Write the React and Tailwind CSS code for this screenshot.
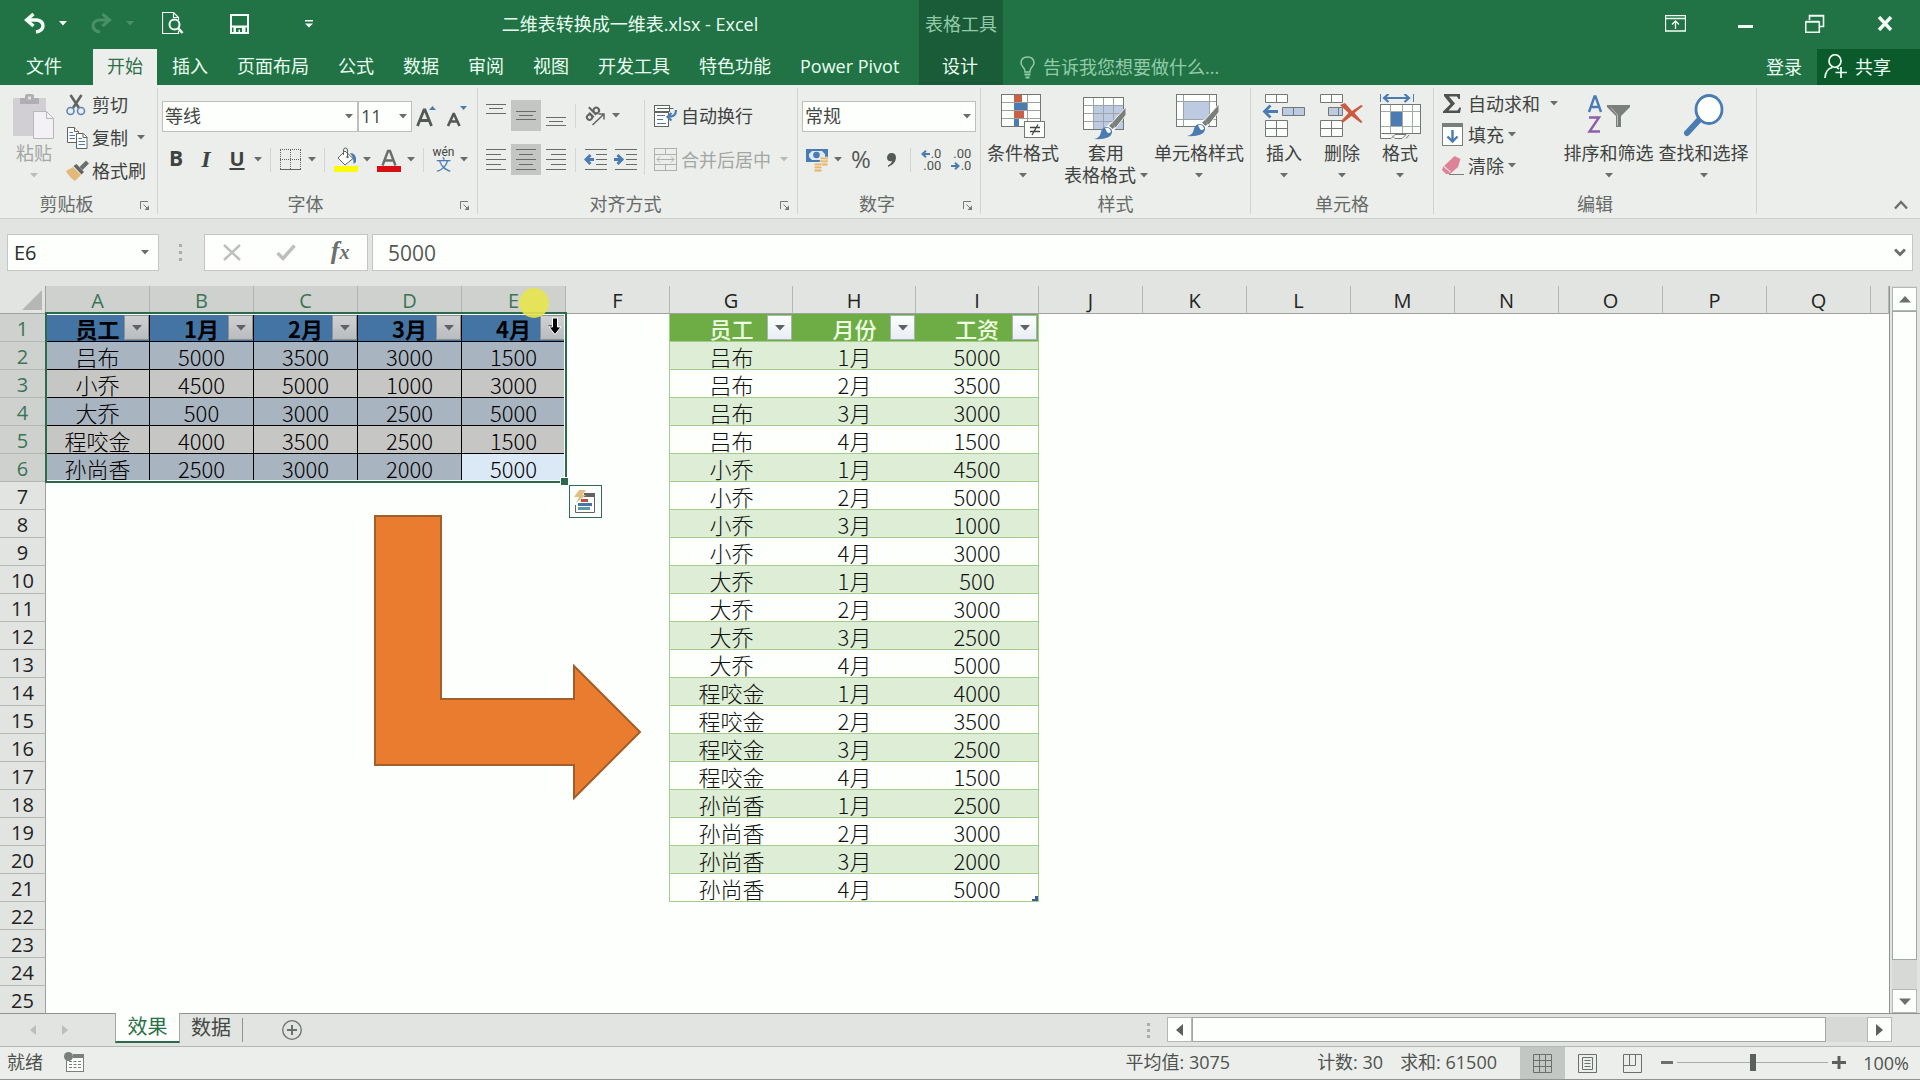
import React from "react";

const SHEET_FONT = "font-['Noto_Sans_CJK_SC',sans-serif]";
const LETTERS = ["A", "B", "C", "D", "E", "F", "G", "H", "I", "J", "K", "L", "M", "N", "O", "P", "Q", ""];

const WIDE = [
  ["员工", "1月", "2月", "3月", "4月"],
  ["吕布", "5000", "3500", "3000", "1500"],
  ["小乔", "4500", "5000", "1000", "3000"],
  ["大乔", "500", "3000", "2500", "5000"],
  ["程咬金", "4000", "3500", "2500", "1500"],
  ["孙尚香", "2500", "3000", "2000", "5000"],
];
const LONG = [
  ["员工", "月份", "工资"],
  ...WIDE.slice(1).flatMap((r) => r.slice(1).map((v, i) => [r[0], WIDE[0][i + 1], v])),
];

/* ---------- small pieces ---------- */

function Caret({ className = "text-[#6a6e6a]" }) {
  return (
    <svg width="8" height="5" viewBox="0 0 8 5" className={"shrink-0 " + className} fill="currentColor" aria-hidden="true">
      <path d="M0 0H8L4 4.6Z" />
    </svg>
  );
}

function CaretButton({ label, className }) {
  return (
    <button aria-label={label} className="flex h-[31px] w-[12px] shrink-0 items-center justify-center">
      <Caret className={className} />
    </button>
  );
}

function Sep() {
  return (
    <span className="flex h-[24px] w-[12px] shrink-0 justify-center">
      <span className="w-px bg-[#d3d6d3]" />
    </span>
  );
}

function Tool({ label, w = "w-[30px]", active, children }) {
  return (
    <button
      aria-label={label}
      className={"flex h-[31px] shrink-0 items-center justify-center " + w + (active ? " bg-[#c3c6c3]" : "")}
    >
      {children}
    </button>
  );
}

function Group({ w, label, launcher, children }) {
  return (
    <section aria-label={label} className={"mt-[3px] flex h-[126px] shrink-0 flex-col border-r border-[#d0d3d0] " + w}>
      <div className="flex flex-1">{children}</div>
      <div className="flex h-[20px] items-center text-[#666a66]">
        <span className="flex-1 text-center leading-[20px]">{label}</span>
        {launcher && (
          <button aria-label={label + "设置"} className="flex w-[24px] justify-center pt-[4px]">
            <svg width="10" height="10" viewBox="0 0 10 10" fill="none" stroke="#777b77" aria-hidden="true">
              <path d="M.5 8V.5H8M3.5 3.5L7.5 7.5" />
              <path d="M9 4.5V9H4.5Z" fill="#777b77" stroke="none" />
            </svg>
          </button>
        )}
      </div>
    </section>
  );
}

function Big({ w, icon, lines, caretInline, muted }) {
  return (
    <button className={"flex shrink-0 flex-col items-center pt-[6px] " + w + (muted ? " text-[#a3a6a3]" : "")}>
      <span className="flex h-[48px] justify-center">{icon}</span>
      <span className="whitespace-nowrap leading-[22px]">{lines[0]}</span>
      <span className="flex h-[22px] items-center gap-[4px] whitespace-nowrap leading-[22px]">
        {caretInline && lines[1]}
        <Caret className={muted ? "text-[#b9bcb9]" : "text-[#6a6e6a]"} />
      </span>
    </button>
  );
}

function SmallRow({ h = "h-[33px]", icon, text, caret, gap = "gap-[12px]" }) {
  return (
    <button className={"flex items-center whitespace-nowrap " + h}>
      <span className="flex w-[26px] shrink-0 items-center justify-start">{icon}</span>
      <span className={"flex items-center " + gap}>
        {text}
        {caret && <Caret />}
      </span>
    </button>
  );
}

/* ---------- ribbon drawings ---------- */

const B = "#4a7cb3";
const G = "#6c706c";

function Lines({ rows, w = 20, h = 22, children }) {
  return (
    <svg width={w} height={h} viewBox={`0 0 ${w} ${h}`} stroke="#686c68" fill="none" aria-hidden="true">
      {rows.map(([x1, x2, y], i) => (
        <path key={i} d={`M${x1} ${y}.5H${x2}`} />
      ))}
      {children}
    </svg>
  );
}

const PasteIcon = (
  <svg width="42" height="46" viewBox="0 0 42 46" aria-hidden="true">
    <rect x="0" y="4" width="33" height="38" rx="1" fill="#d2cfd4" />
    <path d="M7 4H12V1.5Q12 0 14 0H19Q21 0 21 1.5V4H26V10H7Z" fill="#b0aeb2" />
    <rect x="15" y="2.500" width="3" height="3" fill="#e4e2e6" />
    <path d="M20.500 17.500H33.500L40.500 24.500V44.500H20.500Z" fill="#f4f1f6" stroke="#b9b6bc" />
    <path d="M33.500 17.500V24.500H40.500" fill="none" stroke="#b9b6bc" />
  </svg>
);
const CutIcon = (
  <svg width="20" height="22" viewBox="0 0 20 22" fill="none" aria-hidden="true">
    <path d="M4.500 1L13 14M15.500 1L7 14" stroke="#616561" strokeWidth="2.600" />
    <circle cx="4.500" cy="17" r="3.500" stroke="#5b86ba" strokeWidth="1.600" />
    <circle cx="15" cy="17" r="3.500" stroke="#5b86ba" strokeWidth="1.600" />
  </svg>
);
const CopyIcon = (
  <svg width="22" height="22" viewBox="0 0 22 22" fill="#fdfffd" stroke="#616561" aria-hidden="true">
    <path d="M1.500 .5H8.500L12.500 4.500V15.500H1.500Z" />
    <path d="M8.500 .5V4.500H12.500" />
    <path d="M3.500 5.500H7M3.500 8.500H9M3.500 11.500H9" stroke={B} />
    <path d="M10.500 6.500H17.500L21 10V21.500H10.500Z" />
    <path d="M17 6.500V10.500H21" />
    <path d="M12.500 11.500H16M12.500 14.500H19M12.500 17.500H19" stroke={B} />
  </svg>
);
const PainterIcon = (
  <svg width="24" height="22" viewBox="0 0 24 22" aria-hidden="true">
    <path d="M0 11L7 7L15 15L9 21Q3 17 0 11Z" fill="#e3b878" />
    <path d="M7.500 6L10.500 4L18 12L15.500 14.500Z" fill="#616561" />
    <path d="M13.500 7L20 .5L23 3.500L16.500 10Z" fill="#6c706c" />
  </svg>
);
const GrowIcon = (up) => (
  <svg width="24" height="26" viewBox="0 0 24 26" aria-hidden="true">
    {up ? (
      <>
        <path d="M2.500 22L9 6H10L16.500 22M5 16.500H14" fill="none" stroke="#555955" strokeWidth="2.800" />
        <path d="M14 6H21L17.500 2Z" fill={B} />
      </>
    ) : (
      <>
        <path d="M3 22L8.500 10H9L14.500 22M5 17.500H12.500" fill="none" stroke="#555955" strokeWidth="2.600" />
        <path d="M15 2H22L18.500 6Z" fill={B} />
      </>
    )}
  </svg>
);
const BordersIcon = (
  <svg width="22" height="22" viewBox="0 0 22 22" fill="none" stroke="#616561" aria-hidden="true">
    <path d="M.5 1V20M10.500 1V20M20.500 1V20M0 .5H21M0 10.500H21" strokeDasharray="1 1" />
    <path d="M0 20.500H21" />
  </svg>
);
const FillIcon = (
  <svg width="26" height="26" viewBox="0 0 26 26" aria-hidden="true">
    <rect x="1" y="19" width="24" height="6" fill="#fdf90a" />
    <path d="M12 4L20 11.500L12 18L5 11Z" fill="#fdfffd" stroke="#616561" />
    <path d="M10.500 8V3Q10.500 1 12.500 1T14.500 3V10" fill="none" stroke="#616561" />
    <circle cx="14.500" cy="10" r="1.200" fill="#616561" />
    <path d="M17 6Q22 6 23 11V15L20.500 17Q21 11 17 6Z" fill={B} />
  </svg>
);
const FontColorIcon = (
  <svg width="24" height="26" viewBox="0 0 24 26" aria-hidden="true">
    <rect x="0" y="19" width="24" height="6" fill="#d90e12" />
    <path d="M5.500 18.500L11 4H13L18.500 18.500M8 13.500H16" fill="none" stroke="#696d69" strokeWidth="2.400" />
  </svg>
);
const OrientIcon = (
  <svg width="22" height="24" viewBox="0 0 22 24" fill="none" stroke="#616561" aria-hidden="true">
    <g transform="rotate(-45 8 10)" strokeWidth="2">
      <circle cx="4" cy="10.500" r="2.600" />
      <path d="M7 7V13.500M10.500 3V13.500" />
      <circle cx="13.500" cy="10.500" r="2.800" />
    </g>
    <path d="M8.500 21L19.500 10.500M14.500 10H20V15.500" strokeWidth="1.500" />
  </svg>
);
const Indent = (out) => (
  <Lines w={23} h={22} rows={[[1, 23, 0], [12, 23, 5], [12, 23, 10], [12, 23, 15], [1, 23, 20]]}>
    <path
      d={out ? "M10 10.500H3M6.500 6L2 10.500L6.500 15" : "M0 10.500H7M3.500 6L8 10.500L3.500 15"}
      stroke={B}
      strokeWidth="3"
    />
  </Lines>
);
const WrapIcon = (
  <svg width="24" height="22" viewBox="0 0 24 22" fill="none" stroke="#616561" aria-hidden="true">
    <rect x=".5" y=".5" width="15" height="6" fill="#fdfffd" />
    <path d="M3 3.500H19.500" />
    <rect x=".5" y="7.500" width="14" height="14" fill="#fdfffd" />
    <path d="M3 10.500H11M3 14.500H9M3 18.500H12" stroke="#55779f" />
    <path d="M22 5Q22 12 14 12M17.500 8L13.500 12L17.500 15.500" stroke={B} strokeWidth="2.200" />
  </svg>
);
const MergeIcon = (
  <svg width="23" height="23" viewBox="0 0 23 23" fill="none" stroke="#aeb1ae" aria-hidden="true">
    <rect x=".5" y=".5" width="22" height="22" />
    <path d="M0 6.500H23M0 16.500H23M11.500 0V6M11.500 17V23M3 11.500H20M6 8.500L3 11.500L6 14.500M17 8.500L20 11.500L17 14.500" />
  </svg>
);
const MoneyIcon = (
  <svg width="24" height="24" viewBox="0 0 24 24" aria-hidden="true">
    <rect x="1" y="1" width="22" height="13" fill={B} />
    <path d="M4 3H20V12H4Z" fill="#dfe8f3" />
    <path d="M4 3H7L4 6ZM20 3H17L20 6ZM4 12V9L7 12Z" fill={B} />
    <circle cx="11.500" cy="7" r="3.300" fill={B} />
    <g fill="#e8b76a" stroke="#eceeec" strokeWidth=".8">
      <rect x="15" y="9" width="8" height="3" rx="1.500" />
      <rect x="15" y="12" width="8" height="3" rx="1.500" />
      <rect x="15" y="15" width="8" height="3" rx="1.500" />
      <rect x="9" y="15" width="8" height="3" rx="1.500" />
      <rect x="9" y="18" width="8" height="3" rx="1.500" />
      <rect x="9" y="21" width="8" height="3" rx="1.500" />
    </g>
  </svg>
);
const MiniArrow = (left) => (
  <svg width="9" height="8" viewBox="0 0 9 8" fill="none" stroke={B} strokeWidth="2" aria-hidden="true">
    <path d={left ? "M9 4H2M5 .8L1.500 4L5 7.200" : "M0 4H7M4 .8L7.500 4L4 7.200"} />
  </svg>
);
const Decimal = (inc) => (
  <span className="flex flex-col font-['Roboto',sans-serif] text-[13px] leading-[12px] text-[#4f534f]">
    <span className="flex items-center justify-end gap-px">
      {inc && MiniArrow(true)}
      {inc ? ".0" : ".00"}
    </span>
    <span className="flex items-center justify-end gap-px">
      {!inc && MiniArrow(false)}
      {inc ? ".00" : ".0"}
    </span>
  </span>
);
const CondIcon = (
  <svg width="44" height="44" viewBox="0 0 44 44" aria-hidden="true">
    <rect x=".5" y=".5" width="39" height="32" fill="#fdfffd" stroke="#747874" />
    <path d="M13.500 1V32M26.500 1V32M1 8.500H39M1 16.500H39M1 24.500H39" stroke="#9da19d" />
    <rect x="13" y="1" width="8" height="7" fill="#c96045" />
    <rect x="13" y="9" width="13" height="7" fill={B} />
    <rect x="13" y="17" width="10" height="7" fill="#c96045" />
    <rect x="13" y="25" width="5" height="7" fill={B} />
    <rect x="23.500" y="27.500" width="20" height="16" fill="#fdfffd" stroke="#747874" />
    <path d="M29 33.500H39M29 37.500H39M37 30.500L31 41" stroke="#444" strokeWidth="1.300" fill="none" />
  </svg>
);
const Brush = (
  <>
    <path d="M26 29L43 10V18L31 33Z" fill="#7b7f7b" stroke="#eceeec" />
    <path d="M23 30L28 25L33 31L29 35Z" fill="#fdfffd" />
    <path d="M26 28.500L29 26L32 30L29.500 32Z" fill="#7b7f7b" />
    <path d="M11 42Q17 41 18 35Q19 30 24 30Q30 31 29 36Q27 43 11 42Z" fill={B} />
    <path d="M22 31Q27 30 28 35Q25 37 24 35Z" fill="#fdfffd" />
  </>
);
const TableStyleIcon = (
  <svg width="46" height="46" viewBox="0 0 46 46" aria-hidden="true">
    <rect x=".5" y="3.500" width="40" height="32" fill="#fdfffd" />
    <rect x="10" y="12" width="30" height="23" fill="#bccbe1" />
    <path d="M10.500 4V35M20.500 4V35M30.500 4V35M1 11.500H40M1 19.500H40M1 27.500H40" stroke="#9da3a6" />
    <rect x=".5" y="3.500" width="40" height="32" fill="none" stroke="#747874" />
    <g transform="translate(0 3)">{Brush}</g>
  </svg>
);
const CellStyleIcon = (
  <svg width="46" height="46" viewBox="0 0 46 46" aria-hidden="true">
    <rect x=".5" y=".5" width="40" height="32" fill="#fdfffd" stroke="#747874" />
    <path d="M7.500 1V32M33.500 1V32M1 7.500H40M1 25.500H40" stroke="#9da3a6" />
    <rect x="8" y="8" width="25" height="17" fill="#bccbe1" />
    {Brush}
  </svg>
);
const InsertIcon = (
  <svg width="44" height="44" viewBox="0 0 44 44" fill="#fdfffd" stroke="#747874" aria-hidden="true">
    <path d="M3.500 .5H25.500V8.500H3.500ZM14.500 .5V8.500M3.500 26.500H25.500V42.500H3.500ZM14.500 26.500V42.500M3.500 34.500H25.500" />
    <path d="M20.500 13.500H42.500V21.500H20.500ZM31.500 13.500V21.500" fill="#bccbe1" />
    <path d="M16 17.500H3M8.500 11.500L2.500 17.500L8.500 23.500" fill="none" stroke={B} strokeWidth="2.800" />
  </svg>
);
const DeleteIcon = (
  <svg width="44" height="44" viewBox="0 0 44 44" fill="#fdfffd" stroke="#747874" aria-hidden="true">
    <path d="M.5 .5H22.500V8.500H.5ZM11.500 .5V8.500M.5 26.500H22.500V42.500H.5ZM11.500 26.500V42.500M.5 34.500H22.500" />
    <path d="M8.500 13.500H22.500V21.500H8.500ZM18.500 13.500V21.500" fill="#bccbe1" />
    <path d="M20 11L25 9L32 17L41 11L43 12L34.500 19L42.500 28L41 29L31.500 22L22.500 29L21 27L28.500 19Z" fill="#cb5a3f" stroke="none" />
  </svg>
);
const FormatIcon = (
  <svg width="42" height="46" viewBox="0 0 42 46" fill="none" stroke="#747874" aria-hidden="true">
    <path d="M1.500 0V8M34.500 0V8" stroke={B} />
    <path d="M5 4H30M9.500 0L5 4L9.500 8M25.500 0L30 4L25.500 8" stroke={B} strokeWidth="2.200" />
    <rect x="1.500" y="10.500" width="40" height="29" fill="#fdfffd" />
    <path d="M11.500 11V39M23.500 11V39M33.500 11V39M2 17.500H41M2 32.500H41" stroke="#a6aaa6" />
    <rect x="12" y="18" width="11" height="14" fill={B} stroke="none" />
    <path d="M1.500 39.500V44.500H12L16 40.500H27L23 44.500H16L14 42.500M27 44.500L30 41" fill="#fdfffd" />
  </svg>
);
const SumIcon = (
  <svg width="20" height="20" viewBox="0 0 20 20" fill="#4f534f" aria-hidden="true">
    <path d="M2 0H18V5H16.500L15 2.500H7L13 9.500L6.500 16.500H15.500L17.500 13.500H19L18 19H1V17.500L8.500 10L2 2Z" />
  </svg>
);
const FillDownIcon = (
  <svg width="21" height="24" viewBox="0 0 21 24" aria-hidden="true">
    <rect x=".5" y=".5" width="20" height="22" fill="#fdfffd" stroke="#7b7f7b" />
    <rect x="0" y="0" width="21" height="4" fill="#7b7f7b" />
    <path d="M10.500 7V18M5.500 13.500L10.500 18.500L15.500 13.500" fill="none" stroke={B} strokeWidth="2.400" />
  </svg>
);
const EraserIcon = (
  <svg width="22" height="21" viewBox="0 0 22 21" aria-hidden="true">
    <path d="M12.500 1L18.500 4L16 12L8 19H4L0 15L1 12Z" fill="#dd8398" />
    <path d="M2 11.500L8.500 17" stroke="#f3d3dc" strokeWidth="1.500" />
    <path d="M7 19.500H22" stroke="#7b7f7b" />
  </svg>
);
const SortIcon = (
  <svg width="44" height="46" viewBox="0 0 44 46" fill="none" aria-hidden="true">
    <path d="M2 18L7.500 2.500H8.500L14 18M4 13H12" stroke={B} strokeWidth="2.400" />
    <path d="M2 23.500H12L2.500 37.500H13" stroke="#8d5faa" strokeWidth="2.400" />
    <path d="M20 11H43V13L34 22V33H29V22L20 13Z" fill="#7b7f7b" />
    <path d="M24 13.500L30.500 21V32" stroke="#b9bcb9" strokeWidth="1" />
  </svg>
);
const FindIcon = (
  <svg width="42" height="44" viewBox="0 0 42 44" fill="none" aria-hidden="true">
    <path d="M16 26L4 39" stroke={B} strokeWidth="6" strokeLinecap="round" />
    <ellipse cx="26" cy="15.500" rx="13" ry="14" fill="#fdfffd" stroke={B} strokeWidth="2.800" />
  </svg>
);

/* ---------- header ---------- */

function TitleBar() {
  return (
    <div className="flex h-[49px] items-stretch">
      <div className="flex w-[919px] shrink-0 items-center">
        <div className="flex w-[341px] shrink-0 items-center pb-[2px] pl-[24px] text-[#f3fff6]">
          <button aria-label="撤消" className="mr-[13px]">
            <svg width="22" height="21" viewBox="0 0 22 21" fill="none" stroke="currentColor" strokeWidth="3.400" aria-hidden="true">
              <path d="M3 7H13Q19 8 19 13Q18.500 18 12 19" />
              <path d="M9.500 1L2.500 7L9.500 13" />
            </svg>
          </button>
          <button aria-label="撤消列表" className="mr-[23px]"><Caret className="text-[#f3fff6]" /></button>
          <button aria-label="恢复" className="mr-[14px] text-[#4a9067]">
            <svg width="22" height="21" viewBox="0 0 22 21" fill="none" stroke="currentColor" strokeWidth="3" aria-hidden="true">
              <path d="M19 7H9Q3 8 3 13Q3.500 18 10 19" />
              <path d="M12.500 1L19.500 7L12.500 13" />
            </svg>
          </button>
          <button aria-label="恢复列表" className="mr-[28px]"><Caret className="text-[#4a9067]" /></button>
          <button aria-label="打印预览" className="mr-[46px]">
            <svg width="22" height="23" viewBox="0 0 22 23" fill="none" stroke="currentColor" aria-hidden="true">
              <path d="M16.500 8V5.500L11.500 .5H.5V21.500H16.500V19M11.500 .5V5.500H16.500" strokeWidth="1.200" />
              <circle cx="12.500" cy="12.500" r="5" strokeWidth="2" />
              <path d="M16 16L20.500 21" strokeWidth="2.600" />
            </svg>
          </button>
          <button aria-label="保存" className="mr-[56px]">
            <svg width="19" height="20" viewBox="0 0 19 20" fill="none" stroke="currentColor" aria-hidden="true">
              <path d="M1 1H18V19H1ZM1 12.500H18" strokeWidth="2" />
              <path d="M3.500 12H15.500V18H3.500Z" fill="currentColor" stroke="none" />
              <path d="M6 18V14H12V18H10V15.500H8.500V18Z" fill="#217346" stroke="none" />
            </svg>
          </button>
          <button aria-label="自定义快速访问工具栏">
            <svg width="8" height="8" viewBox="0 0 8 8" fill="currentColor" aria-hidden="true">
              <path d="M0 0H8V1.500H0ZM0 3.500H8L4 7.500Z" />
            </svg>
          </button>
        </div>
        <h1 className="flex-1 pb-[2px] text-center text-[#eafff0]">二维表转换成一维表.xlsx - Excel</h1>
      </div>
      <div className="flex w-[84px] shrink-0 items-center justify-center bg-[#1a5c38] pb-[2px] text-[#93cba8]">表格工具</div>
      <div className="flex flex-1 items-center justify-end gap-[52px] pb-[2px] pr-[27px] text-[#f3fff6]">
        <button aria-label="功能区显示选项">
          <svg width="21" height="17" viewBox="0 0 21 17" fill="none" stroke="currentColor" aria-hidden="true">
            <path d="M.5 .5H20.500V16H.5ZM.5 3.500H20.500M10.500 14V6M7 9.500L10.500 6L14 9.500" strokeWidth="1.300" />
          </svg>
        </button>
        <button aria-label="最小化" className="pt-[6px]">
          <svg width="15" height="3" aria-hidden="true"><rect width="15" height="3" fill="currentColor" /></svg>
        </button>
        <button aria-label="还原">
          <svg width="20" height="19" viewBox="0 0 20 19" fill="none" stroke="currentColor" aria-hidden="true">
            <path d="M4.500 6V1.500H18.500V12.500H15M4 2H19" strokeWidth="1.600" />
            <path d="M.7 8H14.300V18.300H.7ZM.7 7.500H14.300" strokeWidth="1.600" />
          </svg>
        </button>
        <button aria-label="关闭">
          <svg width="16" height="15" viewBox="0 0 16 15" stroke="currentColor" strokeWidth="3.400" aria-hidden="true">
            <path d="M2 1L14 14M14 1L2 14" />
          </svg>
        </button>
      </div>
    </div>
  );
}

function TabBar() {
  const tabs = ["开始", "插入", "页面布局", "公式", "数据", "审阅", "视图", "开发工具", "特色功能", "Power Pivot"];
  return (
    <nav className="flex h-[36px] text-[#eafff0]">
      <div className="flex w-[919px] shrink-0 gap-px">
        <button className="mr-[4px] w-[88px] shrink-0 pb-[2px]">文件</button>
        {tabs.map((t, i) => (
          <button
            key={t}
            className={"shrink-0 whitespace-nowrap px-[14px] pb-[2px] " + (i === 0 ? "bg-[#eceeec] text-[#2c7049]" : "")}
          >
            {t}
          </button>
        ))}
      </div>
      <button className="w-[84px] shrink-0 bg-[#1a5c38] pb-[2px] pr-[2px]">设计</button>
      <div className="flex flex-1 items-center gap-[8px] pl-[17px] text-[#93cba8]">
        <svg width="15" height="23" viewBox="0 0 15 23" fill="none" stroke="currentColor" strokeWidth="1.500" aria-hidden="true">
          <path d="M5 16Q5 13 3 11Q1 9 1 6.500Q1.500 1 7.500 1T14 6.500Q14 9 12 11Q10 13 10 16Z" />
          <path d="M4.500 18.500H10.500M5.500 21.500H9.500" strokeWidth="2" />
        </svg>
        <input
          aria-label="告诉我您想要做什么"
          placeholder="告诉我您想要做什么..."
          className="w-[200px] bg-transparent pb-px placeholder:text-[#93cba8] placeholder:opacity-100"
        />
      </div>
      <button className="mr-[15px] shrink-0 pb-px">登录</button>
      <button className="flex w-[103px] shrink-0 items-center gap-[8px] bg-[#0b5a2c] pb-px pl-[7px]">
        <svg width="23" height="25" viewBox="0 0 23 25" fill="none" stroke="currentColor" strokeWidth="1.700" aria-hidden="true">
          <ellipse cx="11" cy="7" rx="6" ry="6.300" />
          <path d="M1 24Q1.500 15 8.500 13.500M13 13.500L15 15M11.500 18.500H23M17 13V24" />
        </svg>
        共享
      </button>
    </nav>
  );
}

function SelectBox({ label, value, w }) {
  return (
    <span className={"relative flex shrink-0 " + w}>
      <select
        aria-label={label}
        defaultValue={value}
        className="h-[31px] w-full appearance-none border border-[#bcc0bc] bg-[#fdfffd] pb-px pl-[2px] text-[#444844]"
      >
        <option>{value}</option>
      </select>
      <Caret className="pointer-events-none absolute right-[5px] top-[13px] text-[#6a6e6a]" />
    </span>
  );
}

function Ribbon() {
  return (
    <div className="flex h-[134px] border-b border-[#cdd0cd] bg-[#eceeec] text-[#3f433f]">
      <Group w="w-[158px]" label="剪贴板" launcher>
        <Big w="ml-[2px] w-[64px]" icon={PasteIcon} lines={["粘贴"]} muted />
        <div className="flex flex-col">
          <SmallRow icon={CutIcon} text="剪切" />
          <SmallRow icon={CopyIcon} text="复制" caret gap="gap-[9px]" />
          <SmallRow icon={PainterIcon} text="格式刷" />
        </div>
      </Group>

      <Group w="w-[320px]" label="字体" launcher>
        <div className="flex flex-col gap-[12px] pl-[4px] pt-[13px]">
          <div className="flex">
            <SelectBox label="字体名称" value="等线" w="w-[196px]" />
            <SelectBox label="字号" value="11" w="w-[54px]" />
            <Tool label="增大字号">{GrowIcon(true)}</Tool>
            <Tool label="减小字号">{GrowIcon(false)}</Tool>
          </div>
          <div className="flex items-center">
            <Tool label="加粗" w="w-[28px]"><b className="pb-[2px] text-[21px] leading-none">B</b></Tool>
            <Tool label="倾斜" w="w-[32px]"><i className="pb-[2px] font-['Liberation_Serif',serif] text-[24px] font-bold leading-none">I</i></Tool>
            <Tool label="下划线"><u className="pb-[2px] text-[20px] font-bold leading-none underline-offset-2">U</u></Tool>
            <CaretButton label="下划线选项" />
            <Sep />
            <Tool label="边框">{BordersIcon}</Tool>
            <CaretButton label="边框选项" />
            <Sep />
            <Tool label="填充颜色" w="w-[31px]">{FillIcon}</Tool>
            <CaretButton label="填充颜色选项" />
            <Tool label="字体颜色" w="w-[32px]">{FontColorIcon}</Tool>
            <CaretButton label="字体颜色选项" />
            <Sep />
            <Tool label="拼音" w="w-[29px]">
              <span className="flex flex-col items-center font-['Roboto','Noto_Sans_CJK_SC',sans-serif]">
                <span className="text-[12px] leading-[11px]">wén</span>
                <span className="text-[15px] leading-[14px] text-[#4a7cb3]">文</span>
              </span>
            </Tool>
            <CaretButton label="拼音选项" />
          </div>
        </div>
      </Group>

      <Group w="w-[320px]" label="对齐方式" launcher>
        <div className="flex flex-col gap-[13px] pl-[3px] pt-[12px]">
          <div className="flex items-center">
            <Tool label="顶端对齐"><Lines rows={[[0, 20, 2], [3, 17, 6], [0, 20, 11]]} h={28} /></Tool>
            <Tool label="垂直居中" active><Lines rows={[[0, 20, 1], [3, 17, 5], [0, 20, 9]]} h={11} /></Tool>
            <Tool label="底端对齐"><Lines rows={[[0, 20, 15], [3, 17, 19], [0, 20, 23]]} h={28} /></Tool>
            <span className="mx-[4px] h-[24px] w-px bg-[#d3d6d3]" />
            <Tool label="方向">{OrientIcon}</Tool>
            <CaretButton label="方向选项" />
          </div>
          <div className="flex items-center">
            <Tool label="左对齐"><Lines rows={[[0, 20, 0], [0, 15, 5], [0, 20, 10], [0, 15, 15], [0, 20, 20]]} /></Tool>
            <Tool label="居中" active><Lines rows={[[0, 20, 0], [3, 17, 5], [0, 20, 10], [3, 17, 15], [0, 20, 20]]} /></Tool>
            <Tool label="右对齐"><Lines rows={[[0, 20, 0], [5, 20, 5], [0, 20, 10], [5, 20, 15], [0, 20, 20]]} /></Tool>
            <span className="mx-[4px] h-[24px] w-px bg-[#d3d6d3]" />
            <Tool label="减少缩进量">{Indent(true)}</Tool>
            <Tool label="增加缩进量">{Indent(false)}</Tool>
          </div>
        </div>
        <span className="ml-[4px] mt-[12px] h-[75px] w-px bg-[#d3d6d3]" />
        <div className="flex flex-col gap-[13px] pl-[9px] pt-[12px]">
          <button className="flex h-[31px] items-center gap-[3px]">{WrapIcon}自动换行</button>
          <button className="flex h-[31px] items-center gap-[4px] text-[#a3a6a3]">
            {MergeIcon}合并后居中
            <Caret className="ml-[5px] text-[#b9bcb9]" />
          </button>
        </div>
      </Group>

      <Group w="w-[183px]" label="数字" launcher>
        <div className="flex flex-col gap-[12px] pl-[4px] pt-[13px]">
          <SelectBox label="数字格式" value="常规" w="w-[174px]" />
          <div className="flex items-center">
            <Tool label="会计数字格式">{MoneyIcon}</Tool>
            <CaretButton label="会计数字格式选项" />
            <Tool label="百分比样式" w="w-[34px]"><span className="pb-px text-[24px] leading-none text-[#555955]">%</span></Tool>
            <Tool label="千位分隔样式" w="w-[26px]">
              <svg width="9" height="14" viewBox="0 0 9 14" aria-hidden="true">
                <path d="M4.500 0Q9 0 9 5Q8.500 11 1 14V12.500Q5 10 5 8Q0 9 0 4.500Q.5 0 4.500 0Z" fill="#555955" />
              </svg>
            </Tool>
            <Sep />
            <Tool label="增加小数位数">{Decimal(true)}</Tool>
            <Tool label="减少小数位数">{Decimal(false)}</Tool>
          </div>
        </div>
      </Group>

      <Group w="w-[270px]" label="样式">
        <Big w="ml-[4px] w-[76px]" icon={CondIcon} lines={["条件格式"]} />
        <Big w="w-[90px]" icon={TableStyleIcon} lines={["套用", "表格格式"]} caretInline />
        <Big w="w-[96px]" icon={CellStyleIcon} lines={["单元格样式"]} />
      </Group>

      <Group w="w-[183px]" label="单元格">
        <Big w="ml-[4px] w-[58px]" icon={InsertIcon} lines={["插入"]} />
        <Big w="w-[58px]" icon={DeleteIcon} lines={["删除"]} />
        <Big w="w-[58px]" icon={FormatIcon} lines={["格式"]} />
      </Group>

      <Group w="w-[323px]" label="编辑">
        <div className="flex w-[127px] shrink-0 flex-col pl-[8px]">
          <SmallRow h="h-[31px]" icon={SumIcon} text="自动求和" caret gap="gap-[10px]" />
          <SmallRow h="h-[31px]" icon={FillDownIcon} text="填充" caret gap="gap-[4px]" />
          <SmallRow h="h-[31px]" icon={EraserIcon} text="清除" caret gap="gap-[4px]" />
        </div>
        <Big w="w-[95px]" icon={SortIcon} lines={["排序和筛选"]} />
        <Big w="w-[95px]" icon={FindIcon} lines={["查找和选择"]} />
      </Group>

      <button aria-label="折叠功能区" className="mb-[8px] ml-auto mr-[12px] self-end">
        <svg width="14" height="10" viewBox="0 0 14 10" fill="none" stroke="#6c706c" strokeWidth="2.400" aria-hidden="true">
          <path d="M1 8.500L7 2L13 8.500" />
        </svg>
      </button>
    </div>
  );
}

function FormulaBar() {
  return (
    <div className="flex h-[67px] shrink-0 items-start pl-[7px] pr-[7px] pt-[15px]">
      <div className="flex h-[37px] w-[152px] shrink-0 items-center border border-[#c3c6c3] bg-[#fdfffd] pr-[9px]">
        <input aria-label="名称框" defaultValue="E6" className="min-w-0 flex-1 bg-transparent pl-[6px] text-[20px] text-[#2b2f2b]" />
        <Caret />
      </div>
      <div className="flex h-[37px] w-[43px] shrink-0 flex-col items-center justify-center gap-[4px]">
        <i className="h-[3px] w-[3px] bg-[#aaaeaa]" />
        <i className="h-[3px] w-[3px] bg-[#aaaeaa]" />
        <i className="h-[3px] w-[3px] bg-[#aaaeaa]" />
      </div>
      <div className="ml-[2px] flex h-[37px] w-[164px] shrink-0 items-center justify-around border border-[#c3c6c3] bg-[#fdfffd]">
        <button aria-label="取消">
          <svg width="18" height="17" viewBox="0 0 18 17" stroke="#bcbfbc" strokeWidth="2.400" aria-hidden="true"><path d="M1 1L17 16M17 1L1 16" /></svg>
        </button>
        <button aria-label="输入">
          <svg width="20" height="17" viewBox="0 0 20 17" stroke="#bcbfbc" strokeWidth="3.400" fill="none" aria-hidden="true"><path d="M1.500 9L7 14.500L18.500 1.500" /></svg>
        </button>
        <button aria-label="插入函数" className="pb-[2px] font-['Liberation_Serif',serif] text-[26px] font-bold italic leading-[30px] text-[#6c706c]">
          f<span className="text-[20px]">x</span>
        </button>
      </div>
      <div className="ml-[4px] flex h-[37px] flex-1 items-center border border-[#c3c6c3] bg-[#fdfffd] pr-[6px]">
        <input aria-label="编辑栏" defaultValue="5000" className="min-w-0 flex-1 bg-transparent pl-[15px] text-[21px] text-[#555955]" />
        <button aria-label="展开编辑栏">
          <svg width="12" height="9" viewBox="0 0 12 9" fill="none" stroke="#6c706c" strokeWidth="3" aria-hidden="true"><path d="M1 1.500L6 6.500L11 1.500" /></svg>
        </button>
      </div>
    </div>
  );
}

/* ---------- sheet ---------- */

function FilterButton({ label, selected }) {
  return (
    <button
      aria-label={"筛选 " + label}
      className={
        "absolute top-[1px] flex h-[25px] w-[25px] items-center justify-center border " +
        (selected
          ? "right-0 border-[#8d9193] bg-linear-to-b from-[#cfd0d2] to-[#b9bcbf]"
          : "right-[1px] border-[#a9b3b5] bg-linear-to-b from-[#fdfffd] to-[#e9edf3]")
      }
    >
      <svg width="10" height="6" viewBox="0 0 10 6" fill="#5e6266" aria-hidden="true"><path d="M0 0H10L5 5.500Z" /></svg>
    </button>
  );
}

function cellFor(r, c) {
  if (r < 6 && c < 5) {
    const bg =
      r === 0 ? "bg-[#4474a4]" : r === 5 && c === 4 ? "bg-[#dbe9f7]" : r % 2 ? "bg-[#a8b4bf]" : "bg-[#c6c6c4]";
    return {
      text: WIDE[r][c],
      header: r === 0,
      selected: true,
      cls: "border-b border-r border-black text-black " + bg + (r === 0 ? " font-bold" : ""),
    };
  }
  if (r < 21 && c > 5 && c < 9) {
    const edge = c === 8 ? " border-b border-r" : " border-b";
    const bg = r === 0 ? "bg-[#6eac46] text-[#efffe4] font-medium" : r % 2 ? "bg-[#deedd6] text-[#0f130f]" : "bg-[#fdfffd] text-[#0f130f]";
    return { text: LONG[r][c - 6], header: r === 0, selected: false, cls: "border-[#a5cb8d] " + bg + edge };
  }
  return null;
}

function Sheet() {
  return (
    <div className="relative min-w-0 flex-1 overflow-hidden border-r border-[#8f9490] bg-[#fdfffd]">
      <table className={"w-full table-fixed border-separate border-spacing-0 text-center font-light " + SHEET_FONT}>
        <colgroup>
          <col className="w-[46px]" />
          {LETTERS.map((l, i) => (
            <col key={i} className={i === 17 ? "" : i > 5 && i < 9 ? "w-[123px]" : "w-[104px]"} />
          ))}
        </colgroup>
        <thead className="font-['Open_Sans',sans-serif] text-[20px]">
          <tr>
            <td className="h-[28px] border-b border-r border-[#9ea29e] bg-[#e1e4e1] p-0">
              <svg width="20" height="20" viewBox="0 0 20 20" className="ml-auto mr-[3px]" aria-hidden="true">
                <path d="M20 0V20H0Z" fill="#b4b7b4" />
              </svg>
            </td>
            {LETTERS.map((l, i) => (
              <th
                key={i}
                scope="col"
                className={
                  "h-[28px] border-b border-r border-b-[#9ea29e] p-0 pt-[2px] font-normal leading-[25px] " +
                  (i < 5 ? "border-r-[#b0b3b0] bg-[#cfd1cf] text-[#3b7555]" : "border-r-[#b4b8b4] bg-[#e1e4e1] text-[#1f231f]")
                }
              >
                {l}
              </th>
            ))}
          </tr>
        </thead>
        <tbody className="text-[22px]">
          {Array.from({ length: 25 }, (_, r) => (
            <tr key={r}>
              <th
                scope="row"
                className={
                  "h-[28px] border-b border-r border-b-[#b4b8b4] border-r-[#9ea29e] p-0 pt-[2px] font-['Open_Sans',sans-serif] text-[20px] font-normal leading-[25px] " +
                  (r < 6 ? "bg-[#cfd1cf] text-[#3b7555]" : "bg-[#e1e4e1] text-[#1f231f]")
                }
              >
                {r + 1}
              </th>
              {LETTERS.map((l, c) => {
                const cell = cellFor(r, c);
                if (!cell)
                  return (
                    <td key={c} className={"h-[28px] p-0" + (c === 5 && r < 21 ? " border-r border-[#a5cb8d]" : "")} />
                  );
                return (
                  <td key={c} className={"relative h-[28px] whitespace-nowrap p-0 pt-px leading-[26px] " + cell.cls}>
                    {cell.text}
                    {cell.header && <FilterButton label={cell.text} selected={cell.selected} />}
                  </td>
                );
              })}
            </tr>
          ))}
        </tbody>
      </table>

      {/* selection frame with fill handle */}
      <div className="pointer-events-none absolute left-[45px] top-[26px] h-[171px] w-[522px] border-2 border-[#2b6b4b]">
        <div className="h-full w-full border border-l-0 border-[#fdfffd]" />
        <span className="absolute -bottom-[4px] -right-[3px] h-[8px] w-[8px] border-l border-t border-white bg-[#2b6b4b]" />
      </div>

      {/* quick analysis */}
      <button aria-label="快速分析" className="absolute left-[569px] top-[199px] flex h-[33px] w-[33px] items-center justify-center border border-[#35685a] bg-[#fdfffd]">
        <svg width="23" height="24" viewBox="0 0 23 24" aria-hidden="true">
          <path d="M1.500 15V22.500H20.500V4" fill="none" stroke="#616561" />
          <rect x="10" y="3" width="11" height="4" fill="#616561" />
          <rect x="7" y="9" width="7" height="3" fill="#c0513e" />
          <rect x="4" y="13" width="14" height="3" fill="#4a74a8" />
          <rect x="4" y="17" width="12" height="3" fill="#5d9aa6" />
          <path d="M5 0H12L8.500 5H12L2 13L5 7H0Z" fill="#e2c084" />
        </svg>
      </button>

      {/* bent arrow shape */}
      <svg className="absolute left-[374px] top-[229px]" width="268" height="286" viewBox="0 0 268 286" role="img" aria-label="箭头">
        <path d="M1 1H67V184H200V151L266 217L200 283V250H1Z" fill="#e97c2e" stroke="#a0602b" strokeWidth="2" />
      </svg>

      {/* table resize mark */}
      <svg className="absolute left-[1032px] top-[610px]" width="6" height="5" aria-hidden="true">
        <path d="M6 0V5H0V3H3V0Z" fill="#3c5f9c" />
      </svg>

      {/* pointer and its highlight */}
      <span className="pointer-events-none absolute left-[519px] top-[2px] h-[30px] w-[30px] rounded-full bg-[#e6e44c]/90" />
      <svg className="pointer-events-none absolute left-[548px] top-[31px]" width="14" height="19" viewBox="0 0 14 19" aria-hidden="true">
        <path d="M4.500 1H9.500V10H13L7 17.500L1 10H4.500Z" fill="#000" stroke="#fff" />
      </svg>
    </div>
  );
}

function VerticalScroll() {
  const btn = "flex h-[24px] shrink-0 items-center justify-center border border-[#b4b8b4] bg-[#fdfffd]";
  return (
    <div className="ml-[2px] mr-[3px] flex w-[25px] shrink-0 flex-col bg-[#d7d9d7] pt-px">
      <button aria-label="向上滚动" className={btn}>
        <svg width="12" height="7" viewBox="0 0 12 7" fill="#6c706c" aria-hidden="true"><path d="M0 6.500H12L6 0Z" /></svg>
      </button>
      <div className="flex-1 border border-[#a3a7a3] bg-[#fdfffd]" />
      <div className="h-[29px] shrink-0" />
      <button aria-label="向下滚动" className={btn}>
        <svg width="12" height="7" viewBox="0 0 12 7" fill="#6c706c" aria-hidden="true"><path d="M0 .5H12L6 7Z" /></svg>
      </button>
    </div>
  );
}

function SheetTabs() {
  const btn = "flex h-[25px] w-[25px] shrink-0 items-center justify-center border border-[#b4b8b4] bg-[#fdfffd]";
  return (
    <div className="flex h-[33px] shrink-0 border-t border-[#8f9490] text-[20px] text-[#444844]">
      <div className="flex w-[115px] shrink-0 items-center gap-[26px] pl-[30px] text-[#bbbebb]">
        <button aria-label="上一张"><svg width="6" height="10" viewBox="0 0 6 10" fill="currentColor" aria-hidden="true"><path d="M6 0V10L0 5Z" /></svg></button>
        <button aria-label="下一张"><svg width="6" height="10" viewBox="0 0 6 10" fill="currentColor" aria-hidden="true"><path d="M0 0V10L6 5Z" /></svg></button>
      </div>
      <button className="-mt-px h-[30px] w-[65px] shrink-0 border-x border-b-2 border-x-[#a3a7a3] border-b-[#2b6b4b] bg-[#fdfffd] leading-[26px] text-[#2c7049]">效果</button>
      <button className="h-[28px] w-[62px] shrink-0 leading-[24px]">数据</button>
      <span className="mt-[4px] h-[24px] w-px bg-[#8f9490]" />
      <button aria-label="新工作表" className="ml-[39px]">
        <svg width="20" height="20" viewBox="0 0 20 20" fill="none" stroke="#6c706c" aria-hidden="true">
          <circle cx="10" cy="10" r="9.300" strokeWidth="1.300" />
          <path d="M10 5V15M5 10H15" strokeWidth="2" />
        </svg>
      </button>
      <div className="flex flex-1 items-center justify-end pr-[17px]">
        <i className="h-[3px] w-[3px] bg-[#aaaeaa] shadow-[0_6px_0_#aaaeaa,0_-6px_0_#aaaeaa]" />
      </div>
      <div className="mr-[28px] mt-[3px] flex h-[25px] w-[725px] shrink-0 bg-[#d7d9d7]">
        <button aria-label="向左滚动" className={btn}><svg width="7" height="12" viewBox="0 0 7 12" fill="#5c605c" aria-hidden="true"><path d="M7 0V12L0 6Z" /></svg></button>
        <div className="mr-[41px] flex-1 border border-[#a3a7a3] bg-[#fdfffd]" />
        <button aria-label="向右滚动" className={btn}><svg width="7" height="12" viewBox="0 0 7 12" fill="#5c605c" aria-hidden="true"><path d="M0 0V12L7 6Z" /></svg></button>
      </div>
    </div>
  );
}

function StatusBar() {
  return (
    <footer className="flex h-[34px] shrink-0 items-stretch border-y border-b-[#8f9490] border-t-[#b4b8b4] bg-[#eceeec] text-[#4f534f]">
      <span className="flex items-center pb-[2px] pl-[7px]">就绪</span>
      <button aria-label="宏录制" className="ml-[21px] pb-[2px]">
        <svg width="21" height="21" viewBox="0 0 21 21" aria-hidden="true">
          <rect x="2.500" y="4.500" width="17" height="15" fill="#fdfffd" stroke="#7b7f7b" />
          <rect x="9" y="2" width="11" height="4" fill="#7b7f7b" />
          <path d="M5 9.500H18M5 12.500H18M5 15.500H18" stroke="#7b7f7b" strokeDasharray="3 1.500" />
          <circle cx="4.500" cy="4.500" r="4.500" fill="#7b7f7b" />
        </svg>
      </button>
      <div className="flex flex-1 items-center justify-end whitespace-nowrap pb-[2px] pr-[23px]">
        <span className="mr-[87px]">平均值: 3075</span>
        <span className="mr-[17px]">计数: 30</span>
        <span>求和: 61500</span>
      </div>
      <button aria-label="普通" className="flex w-[45px] shrink-0 items-center justify-center bg-[#c3c7c3]">
        <svg width="20" height="19" viewBox="0 0 20 19" fill="none" stroke="#6c706c" aria-hidden="true"><path d="M.5 .5H18.500V18.500H.5ZM.5 6.500H18.500M.5 12.500H18.500M6.500 .5V18.500M12.500 .5V18.500" /></svg>
      </button>
      <button aria-label="页面布局视图" className="flex w-[45px] shrink-0 items-center justify-center">
        <svg width="19" height="19" viewBox="0 0 19 19" fill="none" stroke="#6c706c" aria-hidden="true"><path d="M.5 .5H18.500V18.500H.5ZM4.500 3.500H14.500V15.500H4.500ZM6.500 6.500H12.500M6.500 9.500H12.500M6.500 12.500H12.500" /></svg>
      </button>
      <button aria-label="分页预览" className="flex w-[45px] shrink-0 items-center justify-center">
        <svg width="19" height="19" viewBox="0 0 19 19" fill="none" stroke="#6c706c" aria-hidden="true"><path d="M.5 .5H18.500V18.500H.5ZM.5 11.500H12.500V.5M6.500 .5V11.500" /></svg>
      </button>
      <div className="flex shrink-0 items-center pb-px pl-[6px]">
        <button aria-label="缩小"><svg width="12" height="3" aria-hidden="true"><rect width="12" height="3" fill="#6c706c" /></svg></button>
        <input
          type="range"
          aria-label="显示比例"
          min="0"
          max="100"
          defaultValue="50"
          className="mx-[4px] h-[17px] w-[151px] appearance-none bg-[linear-gradient(#a9ada9,#a9ada9)] bg-[length:100%_1px] bg-center bg-no-repeat [&::-webkit-slider-thumb]:h-[17px] [&::-webkit-slider-thumb]:w-[6px] [&::-webkit-slider-thumb]:appearance-none [&::-webkit-slider-thumb]:bg-[#5c605c]"
        />
        <button aria-label="放大"><svg width="14" height="13" stroke="#5c605c" strokeWidth="3" aria-hidden="true"><path d="M7 0V13M0 6.500H14" /></svg></button>
        <span className="w-[74px] pr-[11px] text-right">100%</span>
      </div>
    </footer>
  );
}

export default function App() {
  return (
    <div className="flex h-screen min-h-[600px] flex-col overflow-hidden bg-[#e1e4e1] font-['Open_Sans','Noto_Sans_CJK_SC',sans-serif] text-[18px] leading-[22px]">
      <header className="shrink-0 bg-[#217346]">
        <TitleBar />
        <TabBar />
        <Ribbon />
      </header>
      <FormulaBar />
      <main className="flex min-h-0 flex-1">
        <Sheet />
        <VerticalScroll />
      </main>
      <SheetTabs />
      <StatusBar />
    </div>
  );
}
